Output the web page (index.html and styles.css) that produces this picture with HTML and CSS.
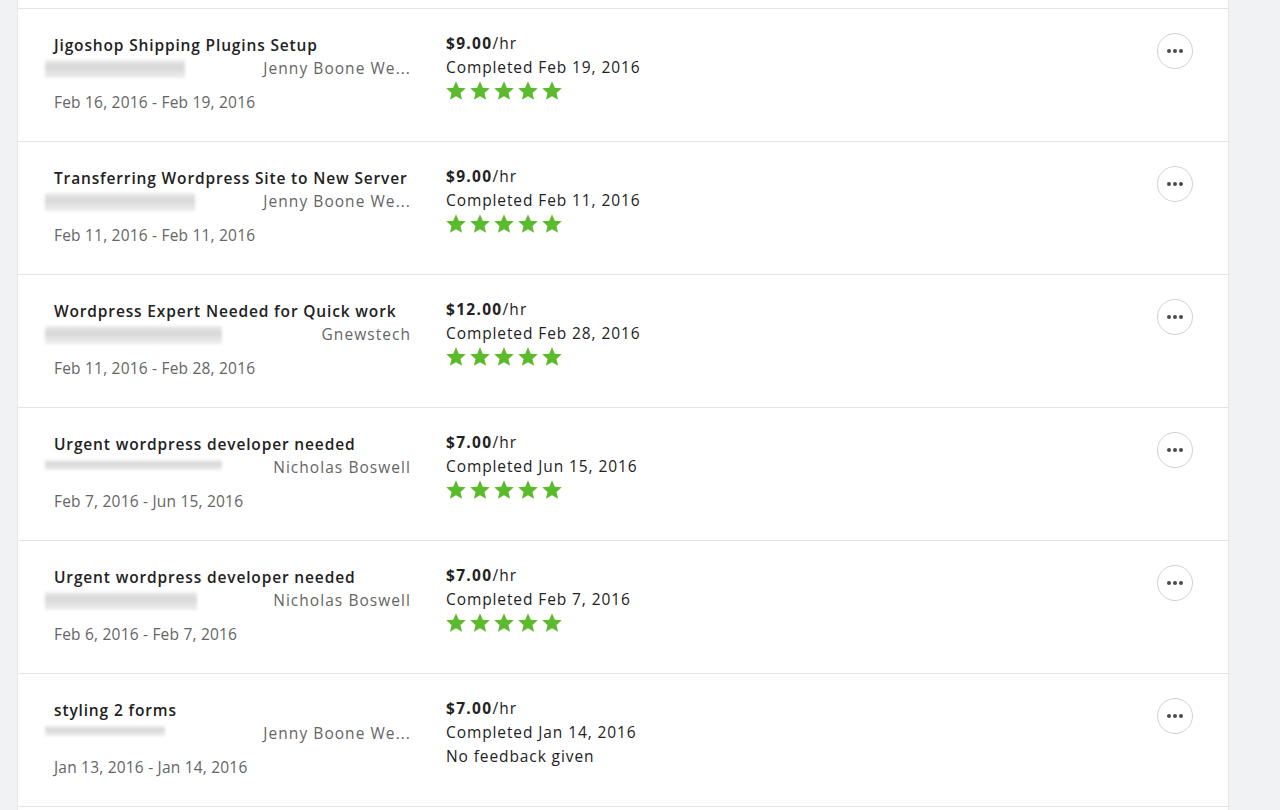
FILE: index.html
```html
<!DOCTYPE html>
<html>
<head>
<meta charset="utf-8">
<link rel="stylesheet" href="styles.css">
</head>
<body>
<div class="page">
  <div class="card">
    <div class="lead"></div>

    <div class="row">
      <div class="job">
        <div class="title">Jigoshop Shipping Plugins Setup</div>
        <div class="client"><span class="blur" style="width:140px"></span><span class="name">Jenny Boone We...</span></div>
        <div class="dates">Feb 16, 2016 - Feb 19, 2016</div>
      </div>
      <div class="terms">
        <div class="price"><b>$9.00</b>/hr</div>
        <div class="done">Completed Feb 19, 2016</div>
        <svg class="stars" width="120" height="22" viewBox="0 0 120 22"><use href="#s5"/></svg>
      </div>
      <button class="more"><span></span><span></span><span></span></button>
    </div>

    <div class="row">
      <div class="job">
        <div class="title">Transferring Wordpress Site to New Server</div>
        <div class="client"><span class="blur" style="width:150px"></span><span class="name">Jenny Boone We...</span></div>
        <div class="dates">Feb 11, 2016 - Feb 11, 2016</div>
      </div>
      <div class="terms">
        <div class="price"><b>$9.00</b>/hr</div>
        <div class="done">Completed Feb 11, 2016</div>
        <svg class="stars" width="120" height="22" viewBox="0 0 120 22"><use href="#s5"/></svg>
      </div>
      <button class="more"><span></span><span></span><span></span></button>
    </div>

    <div class="row">
      <div class="job">
        <div class="title">Wordpress Expert Needed for Quick work</div>
        <div class="client"><span class="blur" style="width:177px"></span><span class="name">Gnewstech</span></div>
        <div class="dates">Feb 11, 2016 - Feb 28, 2016</div>
      </div>
      <div class="terms">
        <div class="price"><b>$12.00</b>/hr</div>
        <div class="done">Completed Feb 28, 2016</div>
        <svg class="stars" width="120" height="22" viewBox="0 0 120 22"><use href="#s5"/></svg>
      </div>
      <button class="more"><span></span><span></span><span></span></button>
    </div>

    <div class="row">
      <div class="job">
        <div class="title">Urgent wordpress developer needed</div>
        <div class="client"><span class="blur thin" style="width:177px"></span><span class="name">Nicholas Boswell</span></div>
        <div class="dates">Feb 7, 2016 - Jun 15, 2016</div>
      </div>
      <div class="terms">
        <div class="price"><b>$7.00</b>/hr</div>
        <div class="done">Completed Jun 15, 2016</div>
        <svg class="stars" width="120" height="22" viewBox="0 0 120 22"><use href="#s5"/></svg>
      </div>
      <button class="more"><span></span><span></span><span></span></button>
    </div>

    <div class="row">
      <div class="job">
        <div class="title">Urgent wordpress developer needed</div>
        <div class="client"><span class="blur" style="width:152px"></span><span class="name">Nicholas Boswell</span></div>
        <div class="dates">Feb 6, 2016 - Feb 7, 2016</div>
      </div>
      <div class="terms">
        <div class="price"><b>$7.00</b>/hr</div>
        <div class="done">Completed Feb 7, 2016</div>
        <svg class="stars" width="120" height="22" viewBox="0 0 120 22"><use href="#s5"/></svg>
      </div>
      <button class="more"><span></span><span></span><span></span></button>
    </div>

    <div class="row">
      <div class="job">
        <div class="title">styling 2 forms</div>
        <div class="client"><span class="blur thin" style="width:120px"></span><span class="name">Jenny Boone We...</span></div>
        <div class="dates">Jan 13, 2016 - Jan 14, 2016</div>
      </div>
      <div class="terms">
        <div class="price"><b>$7.00</b>/hr</div>
        <div class="done">Completed Jan 14, 2016</div>
        <div class="nofb">No feedback given</div>
      </div>
      <button class="more"><span></span><span></span><span></span></button>
    </div>

    <div class="row tail"></div>
  </div>
</div>

<svg width="0" height="0" class="defs">
  <defs>
    <polygon id="st" points="10,0.2 12.76,6.7 19.8,7.32 14.47,11.95 16.05,18.83 10,15.2 3.95,18.83 5.53,11.95 0.2,7.32 7.24,6.7"/>
    <g id="s5" fill="#5cbb2c">
      <use href="#st" x="0"/>
      <use href="#st" x="24"/>
      <use href="#st" x="48"/>
      <use href="#st" x="72"/>
      <use href="#st" x="96"/>
    </g>
  </defs>
</svg>
</body>
</html>
```

FILE: styles.css
```css
html, body {
  margin: 0;
  padding: 0;
  background: #f1f2f4;
}
body {
  font-family: "Open Sans", "Liberation Sans", sans-serif;
  color: #222;
  font-size: 15.5px;
  height: 810px;
  overflow: hidden;
}
.page {
  padding-left: 17px;
  width: 1212px;
}
.card {
  background: #fff;
  border-left: 1px solid #e6e6e6;
  border-right: 1px solid #e6e6e6;
}
.lead {
  height: 8px;
}
.row {
  height: 132px;
  border-top: 1px solid #e4e4e4;
  display: flex;
  align-items: flex-start;
  padding-left: 36px;
}
.row.tail {
  height: 20px;
}
.job {
  width: 356px;
  padding-top: 25px;
}
.title {
  font-weight: 600;
  line-height: 22px;
  letter-spacing: 0.85px;
  color: #222;
  white-space: nowrap;
}
.client {
  display: flex;
  justify-content: space-between;
  align-items: center;
  margin-top: 1px;
  line-height: 23px;
  height: 23px;
  color: #656565;
}
.name {
  letter-spacing: 1.05px;
  margin-right: -1px;
  white-space: nowrap;
}
.blur {
  display: block;
  height: 18px;
  margin-left: -9px;
  background: linear-gradient(180deg, #eaeaea 0%, #d2d2d2 40%, #dcdcdc 60%, #ececec 100%);
  filter: blur(1.5px);
  opacity: 0.9;
}
.blur.thin {
  height: 10px;
  margin-top: -6px;
}
.dates {
  margin-top: 11px;
  line-height: 22px;
  color: #656565;
  letter-spacing: 0.2px;
}
.terms {
  margin-left: 36px;
  padding-top: 22px;
  width: 600px;
  line-height: 24px;
  letter-spacing: 0.9px;
  white-space: nowrap;
}
.price {
  letter-spacing: 1.1px;
}
.price b {
  font-weight: 700;
  letter-spacing: 1.3px;
}
.stars {
  display: block;
  margin-top: 2px;
}
.nofb {
  line-height: 24px;
}
.more {
  margin-left: auto;
  margin-right: 35px;
  margin-top: 24px;
  width: 36px;
  height: 36px;
  border-radius: 50%;
  border: 1px solid #d2d2d2;
  background: #fff;
  display: flex;
  align-items: center;
  justify-content: center;
  gap: 2px;
  padding: 0;
}
.more span {
  width: 4px;
  height: 4px;
  border-radius: 50%;
  background: #4a4a4a;
}
.defs {
  position: absolute;
}
```
